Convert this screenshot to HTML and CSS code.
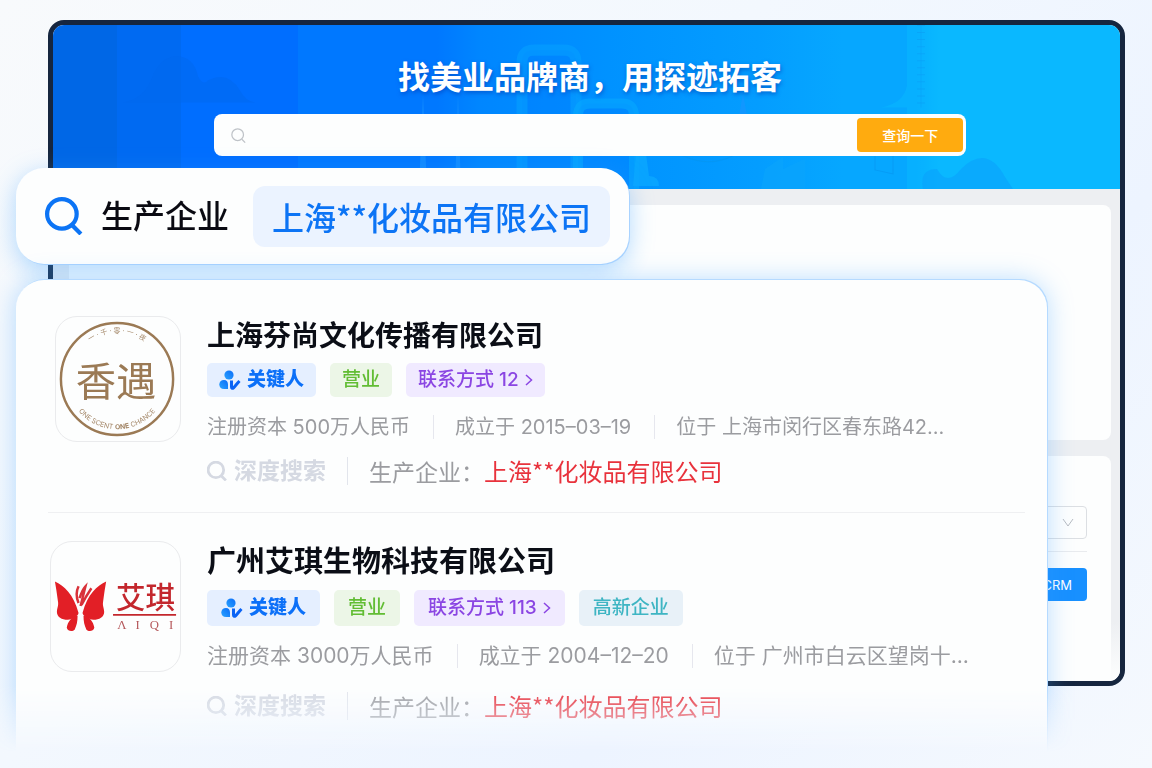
FILE: index.html
```
<!DOCTYPE html>
<html lang="zh-CN">
<head>
    <meta charset="UTF-8">
    <meta name="viewport" content="width=device-width, initial-scale=1.0">
    <title>找美业品牌商，用探迹拓客</title>
    <link rel="stylesheet" href="styles.css">
</head>
<body>
    <svg class="defs" aria-hidden="true">
        <defs>
            <linearGradient id="keyFill" x1="1" y1="0" x2="0" y2="1">
                <stop offset="0" stop-color="#0a6cf8"/>
                <stop offset="1" stop-color="#2ba4ff"/>
            </linearGradient>
            <symbol id="search" viewBox="0 0 36 36">
                <circle cx="16" cy="16" r="14" fill="none" stroke="currentColor" stroke-width="var(--stroke)"/>
                <path d="M26 27l8 8" fill="none" stroke="currentColor" stroke-width="var(--stroke)"/>
            </symbol>
            <symbol id="key" viewBox="0 0 22 20">
                <circle cx="10" cy="5" r="4.6" fill="url(#keyFill)"/>
                <path d="M5 10C2 10 .3 12 .3 14.500S2 19 5 19h4v-4.500C9 12 7.600 10 5 10z" fill="url(#keyFill)"/>
                <path d="M12.500 10.500V17c0 1.500 1 1.700 2 .8 2-1.800 3.500-4.300 6-6.800" fill="none" stroke="#0a63f5" stroke-width="3"/>
            </symbol>
            <symbol id="chevron" viewBox="0 0 8 12">
                <path d="M1 1l5.500 5L1 11" fill="none" stroke="currentColor" stroke-width="1.500"/>
            </symbol>
        </defs>
    </svg>

    <div class="stage">
        <div class="window">
            <header class="banner">
                <svg class="banner-art" viewBox="0 0 1067 163" preserveAspectRatio="none" aria-hidden="true">
                    <path d="M70 77q20-3 28-22 8-23 25-24 18 0 22 20 5 10 10 4 20-10 32 10 6 11 15 12z" fill="#0068ee" opacity=".5"/>
                    <path d="M854 0h30v163h-30zM854 60q-3 18-26 22h26z" fill="#09b8ff" opacity=".55"/>
                    <path d="M868 0v82" stroke="#0aa0f5" stroke-width="8" stroke-dasharray="1 6" opacity=".6"/>
                    <path d="M868 0v82" stroke="#0aa0f5" opacity=".5"/>
                    <path d="M469 163V37q0-12 12-12h30q12 0 12 12v126" fill="#0070ff" fill-opacity=".2" stroke="#06a3ff" stroke-width="11" stroke-opacity=".5"/>
                    <path d="M525 163V90q0-12 12-12h32q12 0 12 12v73" fill="#0070ff" fill-opacity=".25" stroke="#06a8ff" stroke-width="10" stroke-opacity=".6"/>
                    <path d="M583 128h10l3 22q10 0 10 10h-26z" fill="#0ba8ff" opacity=".8"/>
                    <path d="M366 163l4-95 4 95M402 163l3-95 3 95M686 90l4-22 4 22" fill="#1a94ff" opacity=".6"/>
                    <path d="M708 163l4-20 18-12v12l22-10v30zM870 163q-4-20 14-20 10 18 24 0 26-25 44 8l8 12z" fill="#0aa4fc" opacity=".7"/>
                    <path d="M822 130v14l18 4v-18M630 130q26 12 50 0" fill="none" stroke="#0794ee" opacity=".6"/>
                </svg>
                <h1 class="banner-title">找美业品牌商，用探迹拓客</h1>
                <form class="banner-search">
                    <svg class="banner-search-icon"><use href="#search"/></svg>
                    <input class="banner-input" type="text" aria-label="搜索">
                    <button class="banner-button" type="button">查询一下</button>
                </form>
            </header>
            <div class="window-body">
                <div class="panel"></div>
                <div class="panel panel-tools">
                    <select class="tool-select" aria-label="筛选"><option></option></select>
                    <hr class="tool-line">
                    <button class="tool-button" type="button">CRM</button>
                </div>
            </div>
        </div>

        <div class="floating">
            <div class="query">
                <svg class="query-icon"><use href="#search"/></svg>
                <span class="query-label">生产企业</span>
                <span class="query-chip">上海**化妆品有限公司</span>
            </div>

            <main class="results">
                <article class="result">
                    <svg class="logo" viewBox="0 0 126 126" role="img" aria-label="香遇">
                        <circle cx="62" cy="63" r="57" fill="none" stroke="#9b7a55" stroke-width="2.500"/>
                        <path id="arcTop" d="M15 63a47 47 0 0 1 94 0" fill="none"/>
                        <path id="arcBottom" d="M11 63a51 51 0 0 0 102 0" fill="none"/>
                        <text class="logo-arc"><textPath href="#arcTop" startOffset="50%">一 · 千 · 零 · 一 · 夜</textPath></text>
                        <text class="logo-arc"><textPath href="#arcBottom" startOffset="50%">ONE SCENT <tspan class="logo-arc-strong">ONE</tspan> CHANCE</textPath></text>
                        <text class="logo-scent" x="61" y="80">香遇</text>
                    </svg>
                    <div class="result-info">
                        <h2 class="result-name">上海芬尚文化传播有限公司</h2>
                        <div class="tags">
                            <span class="tag tag-key"><svg class="key-icon"><use href="#key"/></svg>关键人</span>
                            <span class="tag tag-open">营业</span>
                            <button class="tag tag-contact" type="button">联系方式 12<svg class="chevron"><use href="#chevron"/></svg></button>
                        </div>
                        <div class="meta">
                            <span>注册资本 500万人民币</span>
                            <span>成立于 2015–03–19</span>
                            <span>位于 上海市闵行区春东路42...</span>
                        </div>
                        <div class="deep">
                            <span class="deep-label"><svg class="deep-icon"><use href="#search"/></svg>深度搜索</span>
                            <span class="deep-match">生产企业：<em>上海**化妆品有限公司</em></span>
                        </div>
                    </div>
                </article>

                <article class="result result-large">
                    <svg class="logo" viewBox="0 0 131 131" role="img" aria-label="艾琪">
                        <g fill="#e21f26">
                            <path d="M4 40c9 4 19 13 24 32-1 4-6 6-11 7-6 0-11-3-11-8 0-4 2-6 1-11C6 52 5 46 4 40z"/>
                            <path d="M56 40c-9 4-19 13-24 32 1 4 6 6 11 7 6 0 11-3 11-8 0-4-2-6-1-11 1-8 2-14 3-20z"/>
                            <path d="M27 75c-6 1-10 6-11 12 1 4 6 4 8 2 2-4 3-8 3-14zM33 75c6 1 10 6 11 12-1 4-6 4-8 2-2-4-3-8-3-14z"/>
                        </g>
                        <path d="M28 62q-4-9 0-17M29 57q3-9 6-12-2 8-5 20M31 64q4-8 10-17" fill="none" stroke="#d8323a" stroke-width="2.500"/>
                        <text class="logo-aiqi" x="96" y="67">艾琪</text>
                        <path d="M63 74h64" stroke="#c3272d" stroke-width="2"/>
                        <text class="logo-latin" y="88"><tspan x="72">Λ</tspan><tspan x="88">I</tspan><tspan x="105">Q</tspan><tspan x="122">I</tspan></text>
                    </svg>
                    <div class="result-info">
                        <h2 class="result-name">广州艾琪生物科技有限公司</h2>
                        <div class="tags">
                            <span class="tag tag-key"><svg class="key-icon"><use href="#key"/></svg>关键人</span>
                            <span class="tag tag-open">营业</span>
                            <button class="tag tag-contact" type="button">联系方式 113<svg class="chevron"><use href="#chevron"/></svg></button>
                            <span class="tag tag-tech">高新企业</span>
                        </div>
                        <div class="meta">
                            <span>注册资本 3000万人民币</span>
                            <span>成立于 2004–12–20</span>
                            <span>位于 广州市白云区望岗十...</span>
                        </div>
                        <div class="deep">
                            <span class="deep-label"><svg class="deep-icon"><use href="#search"/></svg>深度搜索</span>
                            <span class="deep-match">生产企业：<em>上海**化妆品有限公司</em></span>
                        </div>
                    </div>
                </article>
            </main>
        </div>
    </div>
</body>
</html>
```
FILE: styles.css
```
* {
    box-sizing: border-box;
}
body {
    margin: 0;
    font-family: Inter, "Noto Sans CJK SC", sans-serif;
    background: linear-gradient(135deg, #f8fafc 0%, #f3f8fe 40%, #edf4ff 70%, #f5f9fe 100%);
}
h1, h2, em {
    margin: 0;
    font-style: normal;
}
button, input, select {
    font-family: inherit;
}
.defs {
    position: absolute;
    width: 0;
    height: 0;
}
/* the window and the floating cards share one grid cell */
.stage {
    display: grid;
    min-height: 100vh;
    overflow: hidden;
}
.window,
.floating {
    grid-area: 1 / 1;
}

/* window */
.window {
    display: flex;
    flex-direction: column;
    margin: 20px 27px 82px 48px;
    border: 5px solid #16263f;
    border-radius: 16px;
    overflow: hidden;
    background: #fdfeff;
}
.banner {
    position: relative;
    padding: 29px 0 33px 7px;
    text-align: center;
    background: linear-gradient(90deg, #0067e6 0 6%, #006af2 6% 12%, #006eff 12% 23%, #0078ff 23% 36%, #0086ff 40%, #0092ff 52%, #049dff 66%, #06a7ff 74% 81%, #0ab8ff 83%);
}
.banner-art {
    position: absolute;
    inset: 0;
    width: 100%;
    height: 100%;
}
.banner-title {
    position: relative;
    color: #fff;
    font-size: 32px;
    line-height: 48px;
    font-weight: 700;
    text-shadow: 1px 2px 4px rgba(0, 60, 180, 0.6);
}
.banner-search {
    position: relative;
    display: flex;
    align-items: center;
    width: 71%;
    margin: 12px auto 0;
    padding: 4px 3px 4px 17px;
    border-radius: 8px;
    background: #fdfefe;
}
.banner-search-icon {
    --stroke: 3px;
    width: 15px;
    height: 15px;
    color: #bfc3c8;
}
.banner-input {
    flex: 1;
    min-width: 0;
    padding: 0 12px;
    border: 0;
    outline: 0;
    background: none;
    font-size: 14px;
}
.banner-button {
    height: 34px;
    padding: 0 25px;
    border: 0;
    border-radius: 4px;
    background: #ffab0f;
    color: #fff;
    font-size: 14px;
    font-weight: 500;
}
.window-body {
    flex: 1;
    display: flex;
    flex-direction: column;
    gap: 16px;
    padding: 16px 9px 0 16px;
    background: linear-gradient(#edeff2 88%, #fdfefe);
}
.panel {
    height: 235px;
    border-radius: 8px;
    background: #fdfefe;
}
.panel-tools {
    flex: 1;
    display: flex;
    flex-direction: column;
    align-items: flex-end;
    height: auto;
    padding: 50px 24px 0;
    border-radius: 8px 8px 0 0;
}
.tool-select {
    width: 160px;
    height: 33px;
    border: 1px solid #dcdfe3;
    border-radius: 4px;
    appearance: none;
    background: url("data:image/svg+xml,%3Csvg xmlns='http://www.w3.org/2000/svg' width='12' height='10'%3E%3Cpath d='M1 1l5 7 5-7' fill='none' stroke='%23b8bcc2'/%3E%3C/svg%3E") no-repeat right 12px center;
}
.tool-line {
    width: 100%;
    margin: 12px 0 16px;
    border: 0;
    border-top: 1px solid #e9ebee;
}
.tool-button {
    height: 33px;
    padding: 0 15px;
    border: 0;
    border-radius: 4px;
    background: #1890ff;
    color: #fff;
    font-size: 13px;
}

/* floating cards, fading out at the bottom of the page */
.floating {
    position: relative;
    display: flex;
    flex-direction: column;
    align-items: flex-start;
    gap: 16px;
    padding: 168px 105px 0 16px;
    mask-image: linear-gradient(#000 calc(100% - 82px), transparent calc(100% - 16px));
}
.query {
    display: flex;
    align-items: center;
    height: 96px;
    padding: 0 19px 0 29px;
    border-radius: 28px;
    background: #fdfefe;
    box-shadow: 1px 1px 0 #a9d3ff, 0 6px 24px rgba(60, 160, 255, 0.4);
    font-size: 32px;
    line-height: 61px;
}
.query-icon {
    --stroke: 4px;
    width: 38px;
    height: 38px;
    color: #0c74f5;
}
.query-label {
    margin: 0 24px 0 18px;
    color: #0a0a12;
    font-weight: 500;
}
.query-chip {
    padding: 0 19px;
    border-radius: 12px;
    background: #ebf3ff;
    color: #0c74f5;
    font-family: "Noto Sans CJK SC", sans-serif;
    font-weight: 500;
}
.results {
    flex: 1;
    width: 100%;
    padding: 0 22px 0 32px;
    border-radius: 28px 28px 0 0;
    background: #fdfefe;
    box-shadow: 1px -1px 0 #b5daff, 0 0 26px rgba(60, 160, 255, 0.36);
}
.result {
    display: grid;
    grid-template-columns: 133px 1fr;
    gap: 26px;
    padding: 36px 0 25px;
    border-bottom: 1px solid #eff0f2;
}
.result-large {
    padding: 28px 0 0;
    border-bottom: 0;
}
.logo {
    justify-self: end;
    width: 126px;
    height: 126px;
    border: 1px solid #eaebed;
    border-radius: 22px;
}
.result-large .logo {
    width: 131px;
    height: 131px;
}
.logo text {
    text-anchor: middle;
}
.logo-arc {
    fill: #a38667;
    font-size: 7px;
}
.logo-arc-strong {
    font-weight: 700;
}
.logo-scent {
    fill: #9b7a55;
    font-family: "Noto Sans CJK SC", sans-serif;
    font-size: 41px;
    font-weight: 400;
}
.logo-aiqi {
    fill: #c3272d;
    font-size: 30px;
    font-weight: 500;
}
.logo-latin {
    fill: #b5595c;
    font-family: "Liberation Serif", serif;
    font-size: 13px;
}
.result-name {
    color: #0b0e16;
    font-size: 28px;
    line-height: 40px;
    font-weight: 700;
}
.result-large .result-name {
    font-size: 29px;
    line-height: 42px;
}
.tags {
    display: flex;
    gap: 14px;
    margin: 7px 0 16px;
}
.tag {
    display: flex;
    align-items: center;
    height: 34px;
    padding: 0 12px;
    border: 0;
    border-radius: 5px;
    font-size: 19px;
    line-height: 28px;
    font-weight: 500;
}
.result-large .tag {
    height: 36px;
    padding: 0 14px;
}
.tag-key {
    background: #e5efff;
    color: #0c70f8;
    font-weight: 900;
}
.key-icon {
    width: 22px;
    height: 20px;
    margin-right: 6px;
}
.tag-open {
    background: #ecf6e7;
    color: #62bd34;
}
.tag-contact {
    background: #f0eaff;
    color: #8b46e3;
}
.chevron {
    width: 8px;
    height: 12px;
    margin-left: 6px;
}
.tag-tech {
    background: #e8f1f8;
    color: #3eb5c3;
}
.meta {
    display: flex;
    color: #9b9ca0;
    font-size: 20px;
    line-height: 28px;
    white-space: nowrap;
}
.result-large .meta {
    font-size: 21px;
}
.meta span + span {
    margin-left: 23px;
    padding-left: 22px;
    background: linear-gradient(#e6e7ee, #e6e7ee) no-repeat left center / 1px 24px;
}
.deep {
    display: flex;
    align-items: center;
    margin-top: 14px;
    font-size: 23px;
    line-height: 32px;
}
.result-large .deep {
    margin-top: 20px;
}
.deep-label {
    display: flex;
    align-items: center;
    color: #d5d9e2;
    font-weight: 700;
}
.deep-icon {
    --stroke: 5px;
    width: 20px;
    height: 20px;
    margin-right: 7px;
    overflow: visible;
}
.deep-match {
    margin-left: 21px;
    padding-left: 22px;
    background: linear-gradient(#e2e5ec, #e2e5ec) no-repeat left center / 1px 28px;
    color: #9b9ca0;
    font-family: "Noto Sans CJK SC", sans-serif;
}
.deep-match em {
    color: #e8323c;
    font-size: 24px;
}
```
